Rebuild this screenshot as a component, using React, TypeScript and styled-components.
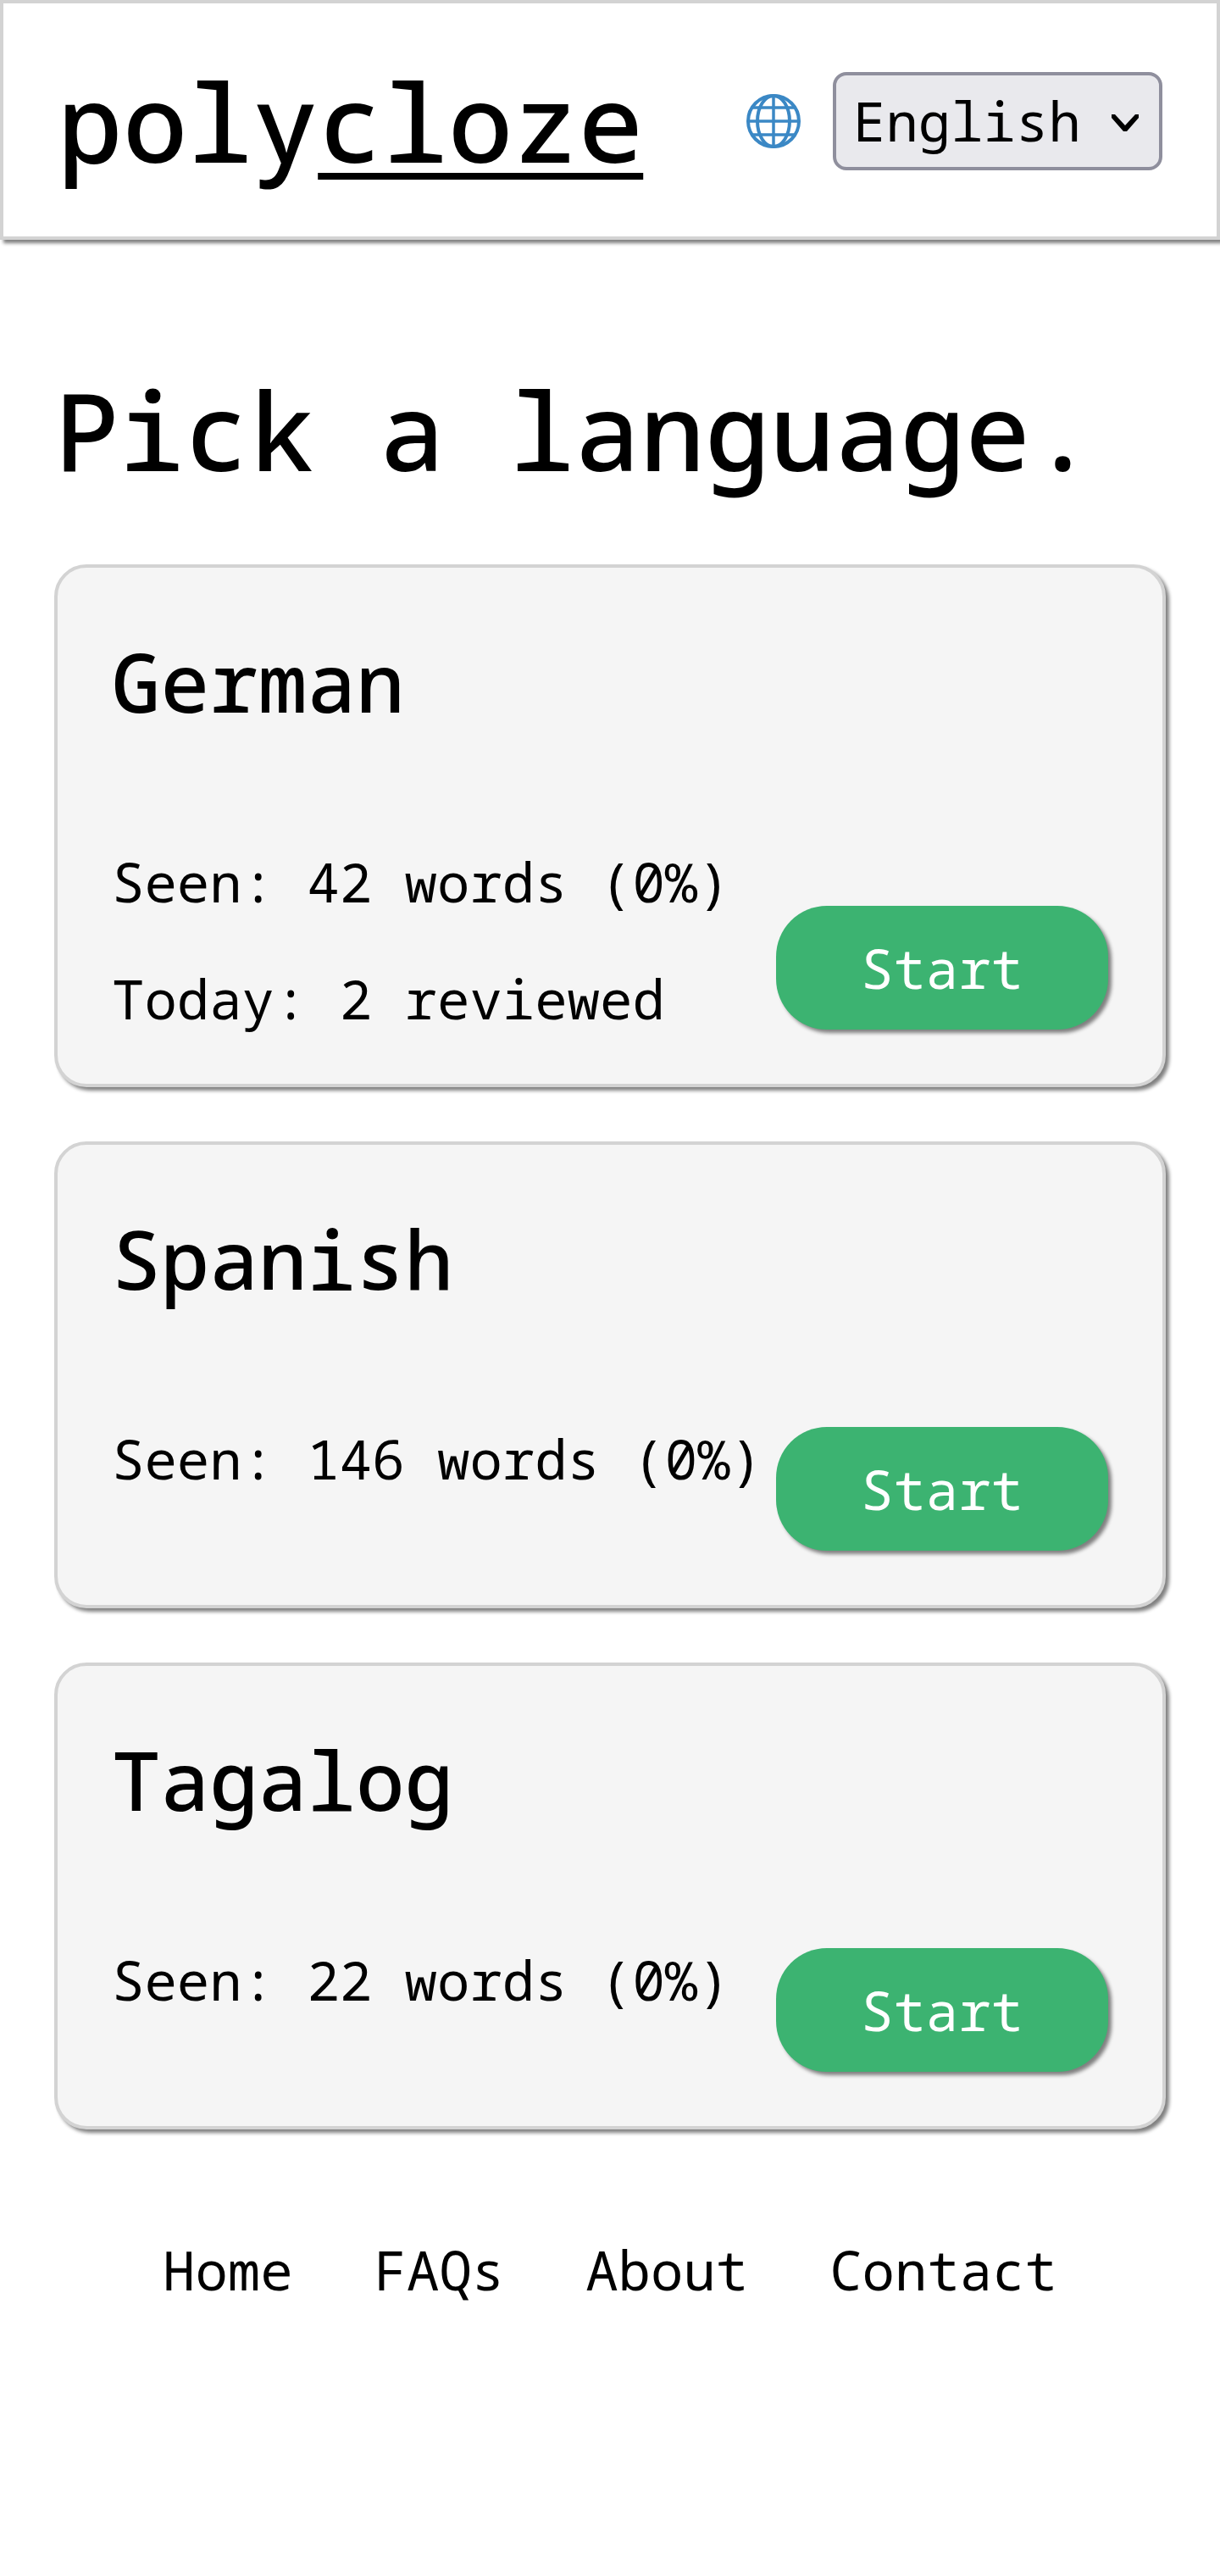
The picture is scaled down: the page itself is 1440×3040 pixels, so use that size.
import React from "react";
import styled, { createGlobalStyle } from "styled-components";

const GlobalStyle = createGlobalStyle`
  *, *::before, *::after { box-sizing: border-box; }
  body {
    margin: 0;
    background: #fff;
    color: #000;
    font-family: "Noto Sans Mono", "DejaVu Sans Mono", monospace;
    font-size: 64px;
    line-height: 64px;
  }
  h1, h2, p, ul { margin: 0; padding: 0; }
`;

const shadow = "4px 4px 4px #808080";

const Header = styled.header`
  display: flex;
  align-items: center;
  justify-content: space-between;
  padding: 64px 64px 62px;
  border: 4px solid #d3d3d3;
  box-shadow: ${shadow};
`;

const Logo = styled.a`
  color: inherit;
  font-size: 128px;
  font-weight: 500;
  line-height: 149px;
  text-decoration: none;
`;

const Cloze = styled.span`
  text-decoration: underline;
  text-decoration-thickness: 8px;
  text-decoration-skip-ink: none;
  text-underline-offset: 12px;
`;

const LanguagePicker = styled.label`
  display: flex;
  align-items: center;
  gap: 38px;
`;

const Globe = styled.svg`
  width: 64px;
  height: 64px;
  fill: none;
  stroke: #3b88c5;
  stroke-width: 4;
`;

const SelectBox = styled.span`
  position: relative;
  display: flex;
`;

const Select = styled.select`
  appearance: none;
  width: 389px;
  height: 116px;
  padding: 0 88px 0 20px;
  border: 4px solid #8f8f9d;
  border-radius: 16px;
  background: #e9e9ed;
  color: #000;
  font: inherit;
  line-height: 88px;
`;

const Chevron = styled.svg`
  position: absolute;
  top: 50px;
  right: 28px;
  width: 32px;
  height: 20px;
  fill: #000;
  pointer-events: none;
`;

const Main = styled.main`
  display: flex;
  flex-direction: column;
  gap: 64px;
  padding: 128px 64px 0;
`;

const Title = styled.h1`
  font-size: 128px;
  font-weight: 500;
  line-height: 191px;
`;

const Card = styled.section`
  padding: 64px;
  border: 4px solid #d3d3d3;
  border-radius: 38px;
  background: #f5f5f5;
  box-shadow: ${shadow};
`;

const CardTitle = styled.h2`
  margin-bottom: 129px;
  font-size: 96px;
  font-weight: 500;
  line-height: 140px;
`;

const CardBody = styled.div`
  display: flex;
  justify-content: space-between;
`;

const Stats = styled.div`
  display: flex;
  flex-direction: column;
  gap: 74px;
  padding: 6px 0 4px;
  white-space: nowrap;
`;

const StartButton = styled.button`
  flex: none;
  align-self: flex-end;
  width: 392px;
  height: 146px;
  padding: 2px 0 0;
  border: 0;
  border-radius: 60px;
  background: #3cb371;
  color: #fff;
  font: inherit;
  box-shadow: ${shadow};
  cursor: pointer;
`;

const Footer = styled.footer`
  display: flex;
  justify-content: center;
  gap: 96px;
  padding: 134px 64px;
`;

const FooterLink = styled.a`
  color: inherit;
  text-decoration: none;
`;

const courses = [
  { name: "German", stats: ["Seen: 42 words (0%)", "Today: 2 reviewed"] },
  { name: "Spanish", stats: ["Seen: 146 words (0%)"] },
  { name: "Tagalog", stats: ["Seen: 22 words (0%)"] },
];

const links = ["Home", "FAQs", "About", "Contact"];

export default function App() {
  return (
    <>
      <GlobalStyle />
      <Header>
        <Logo href="#">
          poly<Cloze>cloze</Cloze>
        </Logo>
        <LanguagePicker>
          <Globe viewBox="0 0 64 64" aria-hidden="true">
            <circle cx="32" cy="32" r="30" />
            <ellipse cx="32" cy="32" rx="19" ry="30" />
            <path d="M32 2v60M2 32h60M6 16h52M6 48h52" strokeWidth="3.5" />
          </Globe>
          <SelectBox>
            <Select aria-label="Display language" defaultValue="English">
              <option>English</option>
            </Select>
            <Chevron viewBox="0 0 32 20" aria-hidden="true">
              <path d="M0 0h4l12 13L28 0h4v4L18 20h-4L0 4z" />
            </Chevron>
          </SelectBox>
        </LanguagePicker>
      </Header>
      <Main>
        <Title>Pick a language.</Title>
        {courses.map(({ name, stats }) => (
          <Card key={name}>
            <CardTitle>{name}</CardTitle>
            <CardBody>
              <Stats>
                {stats.map((line) => (
                  <p key={line}>{line}</p>
                ))}
              </Stats>
              <StartButton type="button">Start</StartButton>
            </CardBody>
          </Card>
        ))}
      </Main>
      <Footer>
        {links.map((link) => (
          <FooterLink key={link} href="#">
            {link}
          </FooterLink>
        ))}
      </Footer>
    </>
  );
}
